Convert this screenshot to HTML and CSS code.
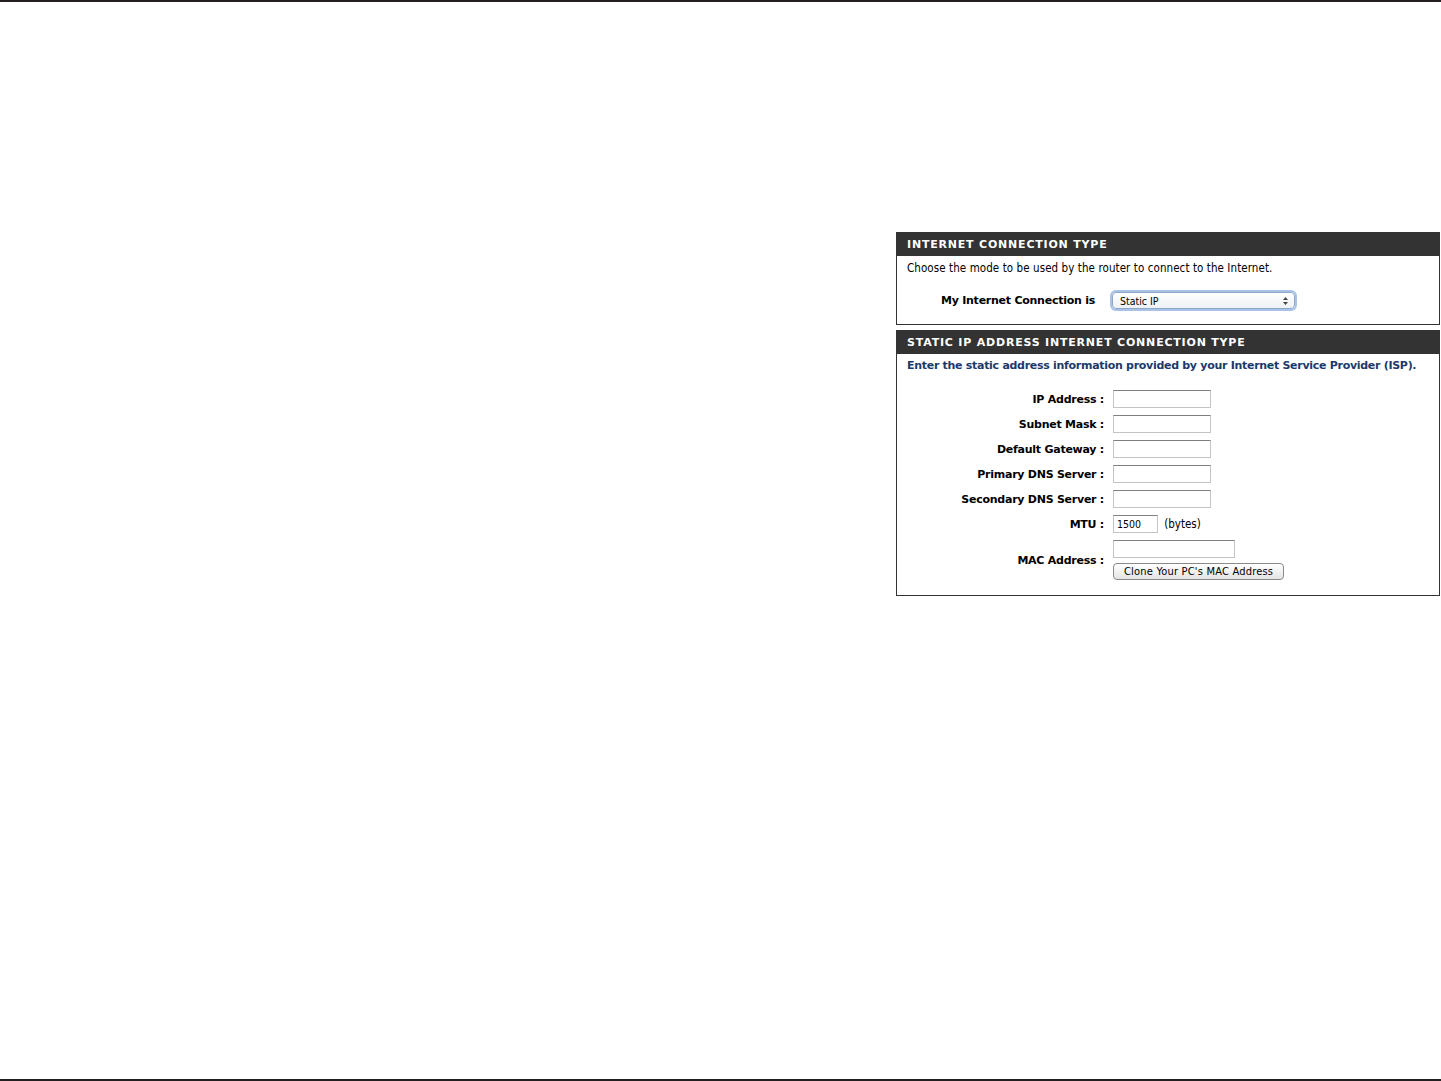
FILE: index.html
```html
<!DOCTYPE html>
<html>
<head>
    <title>Internet Connection Setup</title>
    <link rel="stylesheet" href="styles.css">
</head>
<body>
    <div class="rule"></div>
    <div id="page">
        <div class="panel">
            <h2 class="panel-title">INTERNET CONNECTION TYPE</h2>
            <div class="panel-body">
                <p class="intro">Choose the mode to be used by the router to connect to the Internet.</p>
                <div class="mode-row">
                    <label for="mode">My Internet Connection is</label>
                    <span class="select-wrap">
                        <select id="mode">
                            <option>Static IP</option>
                            <option>Dynamic IP (DHCP)</option>
                            <option>PPPoE (Username / Password)</option>
                        </select>
                        <svg class="select-arrows" width="7" height="10" viewBox="0 0 7 10">
                            <path d="M1 4 L3.5 1 L6 4 Z" fill="#444"/>
                            <path d="M1 6 L3.5 9 L6 6 Z" fill="#444"/>
                        </svg>
                    </span>
                </div>
            </div>
        </div>

        <div class="panel">
            <h2 class="panel-title">STATIC IP ADDRESS INTERNET CONNECTION TYPE</h2>
            <div class="panel-body">
                <p class="intro note">Enter the static address information provided by your Internet Service Provider (ISP).</p>
                <div class="form-grid">
                    <label for="ip">IP Address :</label>
                    <div><input type="text" id="ip" class="field"></div>

                    <label for="mask">Subnet Mask :</label>
                    <div><input type="text" id="mask" class="field"></div>

                    <label for="gw">Default Gateway :</label>
                    <div><input type="text" id="gw" class="field"></div>

                    <label for="dns1">Primary DNS Server :</label>
                    <div><input type="text" id="dns1" class="field"></div>

                    <label for="dns2">Secondary DNS Server :</label>
                    <div><input type="text" id="dns2" class="field"></div>

                    <label for="mtu">MTU :</label>
                    <div><input type="text" id="mtu" class="field short" value="1500"> <span class="unit">(bytes)</span></div>

                    <label for="mac" class="mac-label">MAC Address :</label>
                    <div class="mac-cell">
                        <input type="text" id="mac" class="field wide">
                        <button type="button">Clone Your PC's MAC Address</button>
                    </div>
                </div>
            </div>
        </div>
    </div>
    <div class="rule bottom"></div>
</body>
</html>
```
FILE: styles.css
```css
body {
    margin: 0;
    background-color: #fff;
    font-family: "DejaVu Sans Condensed", "DejaVu Sans", sans-serif;
    font-size: 11px;
    color: #000;
    height: 1081px;
    display: flex;
    flex-direction: column;
}

.rule {
    height: 2px;
    background-color: #231f20;
}

.rule.bottom {
    margin-top: auto;
}

#page {
    padding: 230px 1px 0 896px;
}

.panel {
    margin-bottom: 5px;
}

.panel-title {
    margin: 0;
    height: 24px;
    line-height: 26px;
    padding-left: 11px;
    background-color: #333;
    color: #fff;
    font-family: "DejaVu Sans", sans-serif;
    font-size: 11px;
    font-weight: bold;
    letter-spacing: 0.8px;
}

.panel-body {
    border: 1px solid #333;
    border-top: none;
    padding: 4px 10px 15px 10px;
}

.intro {
    margin: 0;
    line-height: 16px;
    font-size: 11.5px;
    letter-spacing: 0.08px;
}

.intro.note {
    color: #1b3a6b;
    font-weight: bold;
    font-family: "DejaVu Sans", sans-serif;
    font-size: 11px;
    letter-spacing: -0.29px;
}

.mode-row {
    margin-top: 16px;
    margin-left: 34px;
    display: flex;
    align-items: center;
    gap: 17px;
}

.mode-row label,
.form-grid label {
    font-family: "DejaVu Sans", sans-serif;
    font-weight: bold;
    font-size: 11px;
    letter-spacing: -0.25px;
}

.select-wrap {
    position: relative;
    display: inline-block;
}

select {
    appearance: none;
    -webkit-appearance: none;
    width: 183px;
    height: 17px;
    padding: 0 0 0 7px;
    font-family: "DejaVu Sans Condensed", "DejaVu Sans", sans-serif;
    font-size: 10.5px;
    border: 1px solid #8da7c9;
    border-radius: 4px;
    background: linear-gradient(#ffffff, #eef1f5);
    box-shadow: 0 0 0 2px #a9c3e8;
    color: #000;
}

.select-arrows {
    position: absolute;
    right: 6px;
    top: 4px;
}

.form-grid {
    margin-top: 16px;
    display: grid;
    grid-template-columns: 197px 1fr;
    column-gap: 9px;
    row-gap: 7px;
    align-items: center;
}

.form-grid label {
    text-align: right;
}

.field {
    box-sizing: border-box;
    width: 98px;
    height: 18px;
    margin: 0;
    padding: 1px 3px;
    font-family: "DejaVu Sans Condensed", "DejaVu Sans", sans-serif;
    font-size: 10.5px;
    border: 1px solid #c4c4c4;
    border-top-color: #7f7f7f;
    background: #fff;
    vertical-align: middle;
}

.field.short {
    width: 45px;
}

.field.wide {
    width: 122px;
}

.unit {
    margin-left: 3px;
    font-size: 11.5px;
    vertical-align: middle;
}

.mac-label {
    align-self: center;
}

.mac-cell {
    display: flex;
    flex-direction: column;
    align-items: flex-start;
    gap: 5px;
}

button {
    height: 17px;
    padding: 0 10px;
    font-family: "DejaVu Sans Condensed", "DejaVu Sans", sans-serif;
    font-size: 11px;
    letter-spacing: 0.2px;
    color: #000;
    border: 1px solid #8a8a8a;
    border-radius: 4px;
    background: linear-gradient(#ffffff, #e4e4e4);
    cursor: pointer;
}
```
